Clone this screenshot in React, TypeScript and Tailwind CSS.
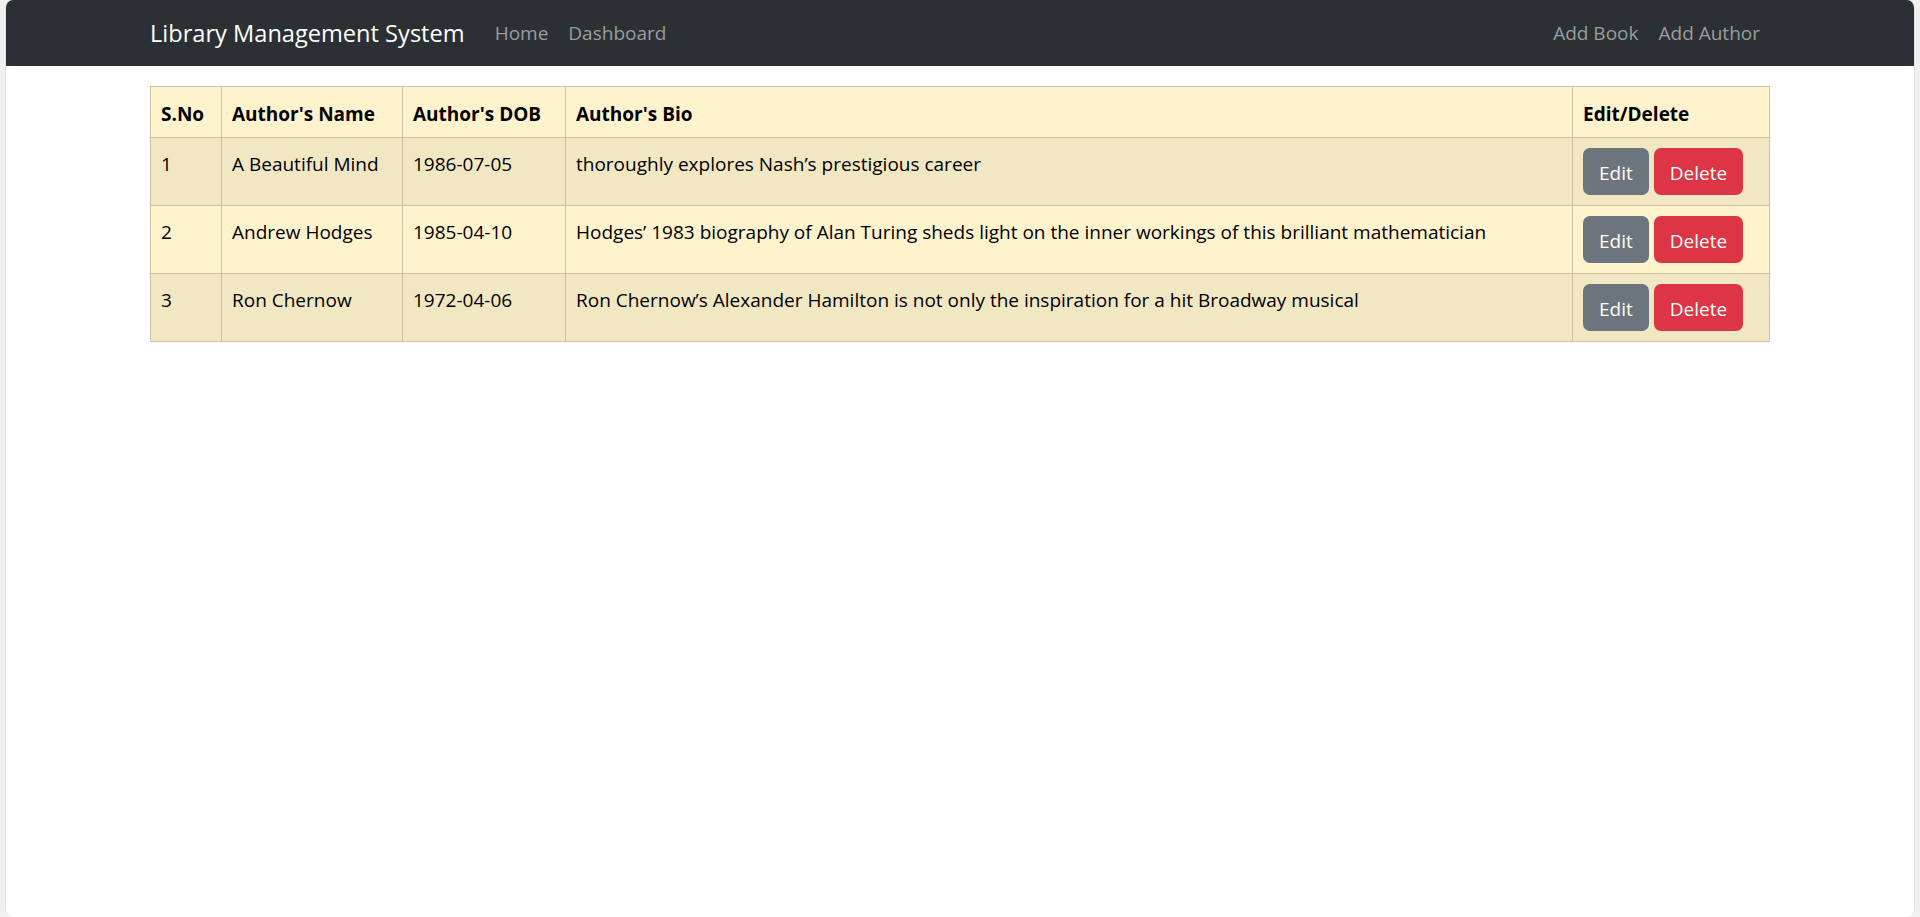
const authors = [
  { id: 1, name: "A Beautiful Mind", dob: "1986-07-05", bio: "thoroughly explores Nash’s prestigious career" },
  { id: 2, name: "Andrew Hodges", dob: "1985-04-10", bio: "Hodges’ 1983 biography of Alan Turing sheds light on the inner workings of this brilliant mathematician" },
  { id: 3, name: "Ron Chernow", dob: "1972-04-06", bio: "Ron Chernow’s Alexander Hamilton is not only the inspiration for a hit Broadway musical" },
];

function Navbar() {
  return (
    <nav className="h-[66px] bg-[#2b3035]">
      <div className="mx-auto flex h-full w-[1650px] items-center px-[15px]">
        <a className="mr-[20px] text-[23.6px] leading-[38px] text-white">Library Management System</a>
        <a className="px-[10px] text-[19px] text-[#9a9c9e]">Home</a>
        <a className="px-[10px] text-[19px] text-[#9a9c9e]">Dashboard</a>
        <div className="ml-auto flex">
          <a className="px-[10px] text-[19px] text-[#9a9c9e]">Add Book</a>
          <a className="px-[10px] text-[19px] text-[#9a9c9e]">Add Author</a>
        </div>
      </div>
    </nav>
  );
}

function AuthorTable() {
  return (
    <table className="w-full table-fixed border-collapse border border-[#ccc3a4] text-[19px] leading-[30px] text-black">
      <colgroup>
        <col className="w-[71px]" />
        <col className="w-[181px]" />
        <col className="w-[163px]" />
        <col />
        <col className="w-[197px]" />
      </colgroup>
      <thead className="bg-[#fff3cd]">
        <tr>
          <th className="border border-[#ccc3a4] px-[10px] pt-[12px] pb-[8px] text-left font-bold">S.No</th>
          <th className="border border-[#ccc3a4] px-[10px] pt-[12px] pb-[8px] text-left font-bold">Author's Name</th>
          <th className="border border-[#ccc3a4] px-[10px] pt-[12px] pb-[8px] text-left font-bold">Author's DOB</th>
          <th className="border border-[#ccc3a4] px-[10px] pt-[12px] pb-[8px] text-left font-bold">Author's Bio</th>
          <th className="border border-[#ccc3a4] px-[10px] pt-[12px] pb-[8px] text-left font-bold">Edit/Delete</th>
        </tr>
      </thead>
      <tbody>
        {authors.map((a, i) => (
          <tr key={a.id} className={i % 2 === 0 ? "bg-[#f2e7c3]" : "bg-[#fff3cd]"}>
            <td className="border border-[#ccc3a4] px-[10px] pt-[11px] pb-[9px] align-top">{a.id}</td>
            <td className="border border-[#ccc3a4] px-[10px] pt-[11px] pb-[9px] align-top whitespace-nowrap">{a.name}</td>
            <td className="border border-[#ccc3a4] px-[10px] pt-[11px] pb-[9px] align-top">{a.dob}</td>
            <td className="border border-[#ccc3a4] px-[10px] pt-[11px] pb-[9px] align-top">{a.bio}</td>
            <td className="border border-[#ccc3a4] p-[10px] align-top">
              <div className="flex gap-[5px]">
                <button className="h-[47px] rounded-[7px] bg-[#6c757d] px-[16px] pt-[3px] text-[19px] text-white">Edit</button>
                <button className="h-[47px] rounded-[7px] bg-[#dc3545] px-[16px] pt-[3px] text-[19px] text-white">Delete</button>
              </div>
            </td>
          </tr>
        ))}
      </tbody>
    </table>
  );
}

export default function App() {
  return (
    <div className="h-[917px] bg-[#f0f0f0] px-[5px] font-['Open_Sans',sans-serif]">
      <div className="h-full overflow-hidden rounded-[8px] border-x border-[#e4e4e4] bg-white">
        <Navbar />
        <div className="mx-auto mt-[20px] w-[1650px] px-[15px]">
          <AuthorTable />
        </div>
      </div>
    </div>
  );
}
